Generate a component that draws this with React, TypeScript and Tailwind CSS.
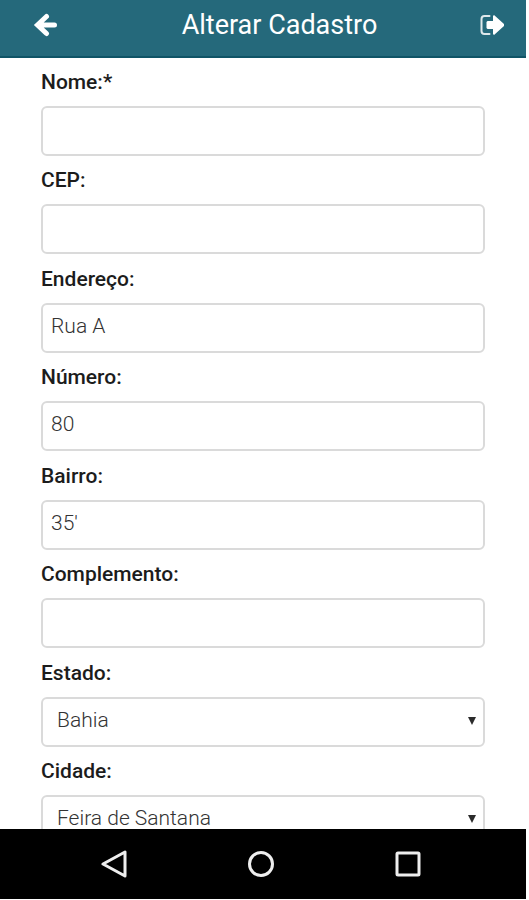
import type { ReactNode } from "react";

type FieldProps = { id: string; label: string; children: ReactNode };

const control =
  "block h-[50px] w-full rounded-[6px] border-2 border-[#dadada] bg-white text-[21px] leading-6 font-light text-[#333333] outline-none focus:border-[#25697b]";

function Field({ id, label, children }: FieldProps) {
  return (
    <div>
      <label htmlFor={id} className="mb-3 block text-[21px] leading-6 font-medium text-[#1c1c1c]">
        {label}
      </label>
      {children}
    </div>
  );
}

function TextField({ id, label, value = "" }: { id: string; label: string; value?: string }) {
  return (
    <Field id={id} label={label}>
      <input id={id} type="text" defaultValue={value} className={`${control} px-2 pb-1`} />
    </Field>
  );
}

function SelectField({ id, label, value }: { id: string; label: string; value: string }) {
  return (
    <Field id={id} label={label}>
      <div className="relative">
        <select id={id} defaultValue={value} className={`${control} appearance-none pr-8 pb-1 pl-[14px]`}>
          <option>{value}</option>
        </select>
        <svg
          aria-hidden="true"
          viewBox="0 0 8 8"
          className="pointer-events-none absolute top-5 right-[9px] h-2 w-2 fill-[#2b2b2b]"
        >
          <path d="M0 0h8L4 8z" />
        </svg>
      </div>
    </Field>
  );
}

export default function App() {
  return (
    <div className="flex h-screen flex-col bg-white pr-[3px] pb-px font-[Roboto,sans-serif]">
      <header className="flex h-[58px] shrink-0 items-center border-b-2 border-[#105466] bg-[#25697b] pr-5 pb-[7px] pl-[33px] text-white">
        <button type="button" aria-label="Voltar" className="w-[46px]">
          <svg viewBox="0 0 24 24" className="block h-6 w-6 fill-none stroke-current">
            <path d="M13.500 3.500 4.500 12l9 8.500M6 12h15.500" strokeWidth="5" strokeLinecap="round" strokeLinejoin="miter" />
          </svg>
        </button>
        <h1 className="flex-1 text-center text-[27px] leading-8 font-normal">Alterar Cadastro</h1>
        <button type="button" aria-label="Sair">
          <svg viewBox="0 0 26 22" className="block h-[22px] w-[26px]">
            <path
              d="M9.500 2H4.500Q1.500 2 1.500 5v12q0 3 3 3h5"
              className="fill-none stroke-current"
              strokeWidth="2"
              strokeLinecap="round"
              strokeOpacity="0.85"
            />
            <path d="M7.500 7H13V2l1-1 10 9v2l-10 9-1-1v-5H7.500l-1-1V8z" className="fill-current" />
          </svg>
        </button>
      </header>

      <main className="flex min-h-0 flex-1 flex-col overflow-hidden px-[41px]">
        <form className="-mb-4 flex flex-1 flex-col justify-between pt-3">
          <TextField id="nome" label="Nome:*" />
          <TextField id="cep" label="CEP:" />
          <TextField id="endereco" label="Endereço:" value="Rua A" />
          <TextField id="numero" label="Número:" value="80" />
          <TextField id="bairro" label="Bairro:" value="35'" />
          <TextField id="complemento" label="Complemento:" />
          <SelectField id="estado" label="Estado:" value="Bahia" />
          <SelectField id="cidade" label="Cidade:" value="Feira de Santana" />
        </form>
      </main>

      <nav className="flex h-[70px] shrink-0 items-center justify-center gap-[119px] bg-black pr-1 text-[#eeeeee]">
        <button type="button" aria-label="Voltar à tela anterior">
          <svg viewBox="0 0 28 28" className="block h-7 w-7 fill-none stroke-current" strokeWidth="3">
            <path d="M25 2v24L3 14z" strokeLinejoin="round" />
          </svg>
        </button>
        <button type="button" aria-label="Início">
          <svg viewBox="0 0 28 28" className="block h-7 w-7 fill-none stroke-current" strokeWidth="3">
            <circle cx="14" cy="14" r="11.500" />
          </svg>
        </button>
        <button type="button" aria-label="Aplicativos recentes">
          <svg viewBox="0 0 28 28" className="block h-7 w-7 fill-none stroke-current" strokeWidth="3">
            <rect x="3" y="3" width="22" height="22" rx="1" />
          </svg>
        </button>
      </nav>
    </div>
  );
}
